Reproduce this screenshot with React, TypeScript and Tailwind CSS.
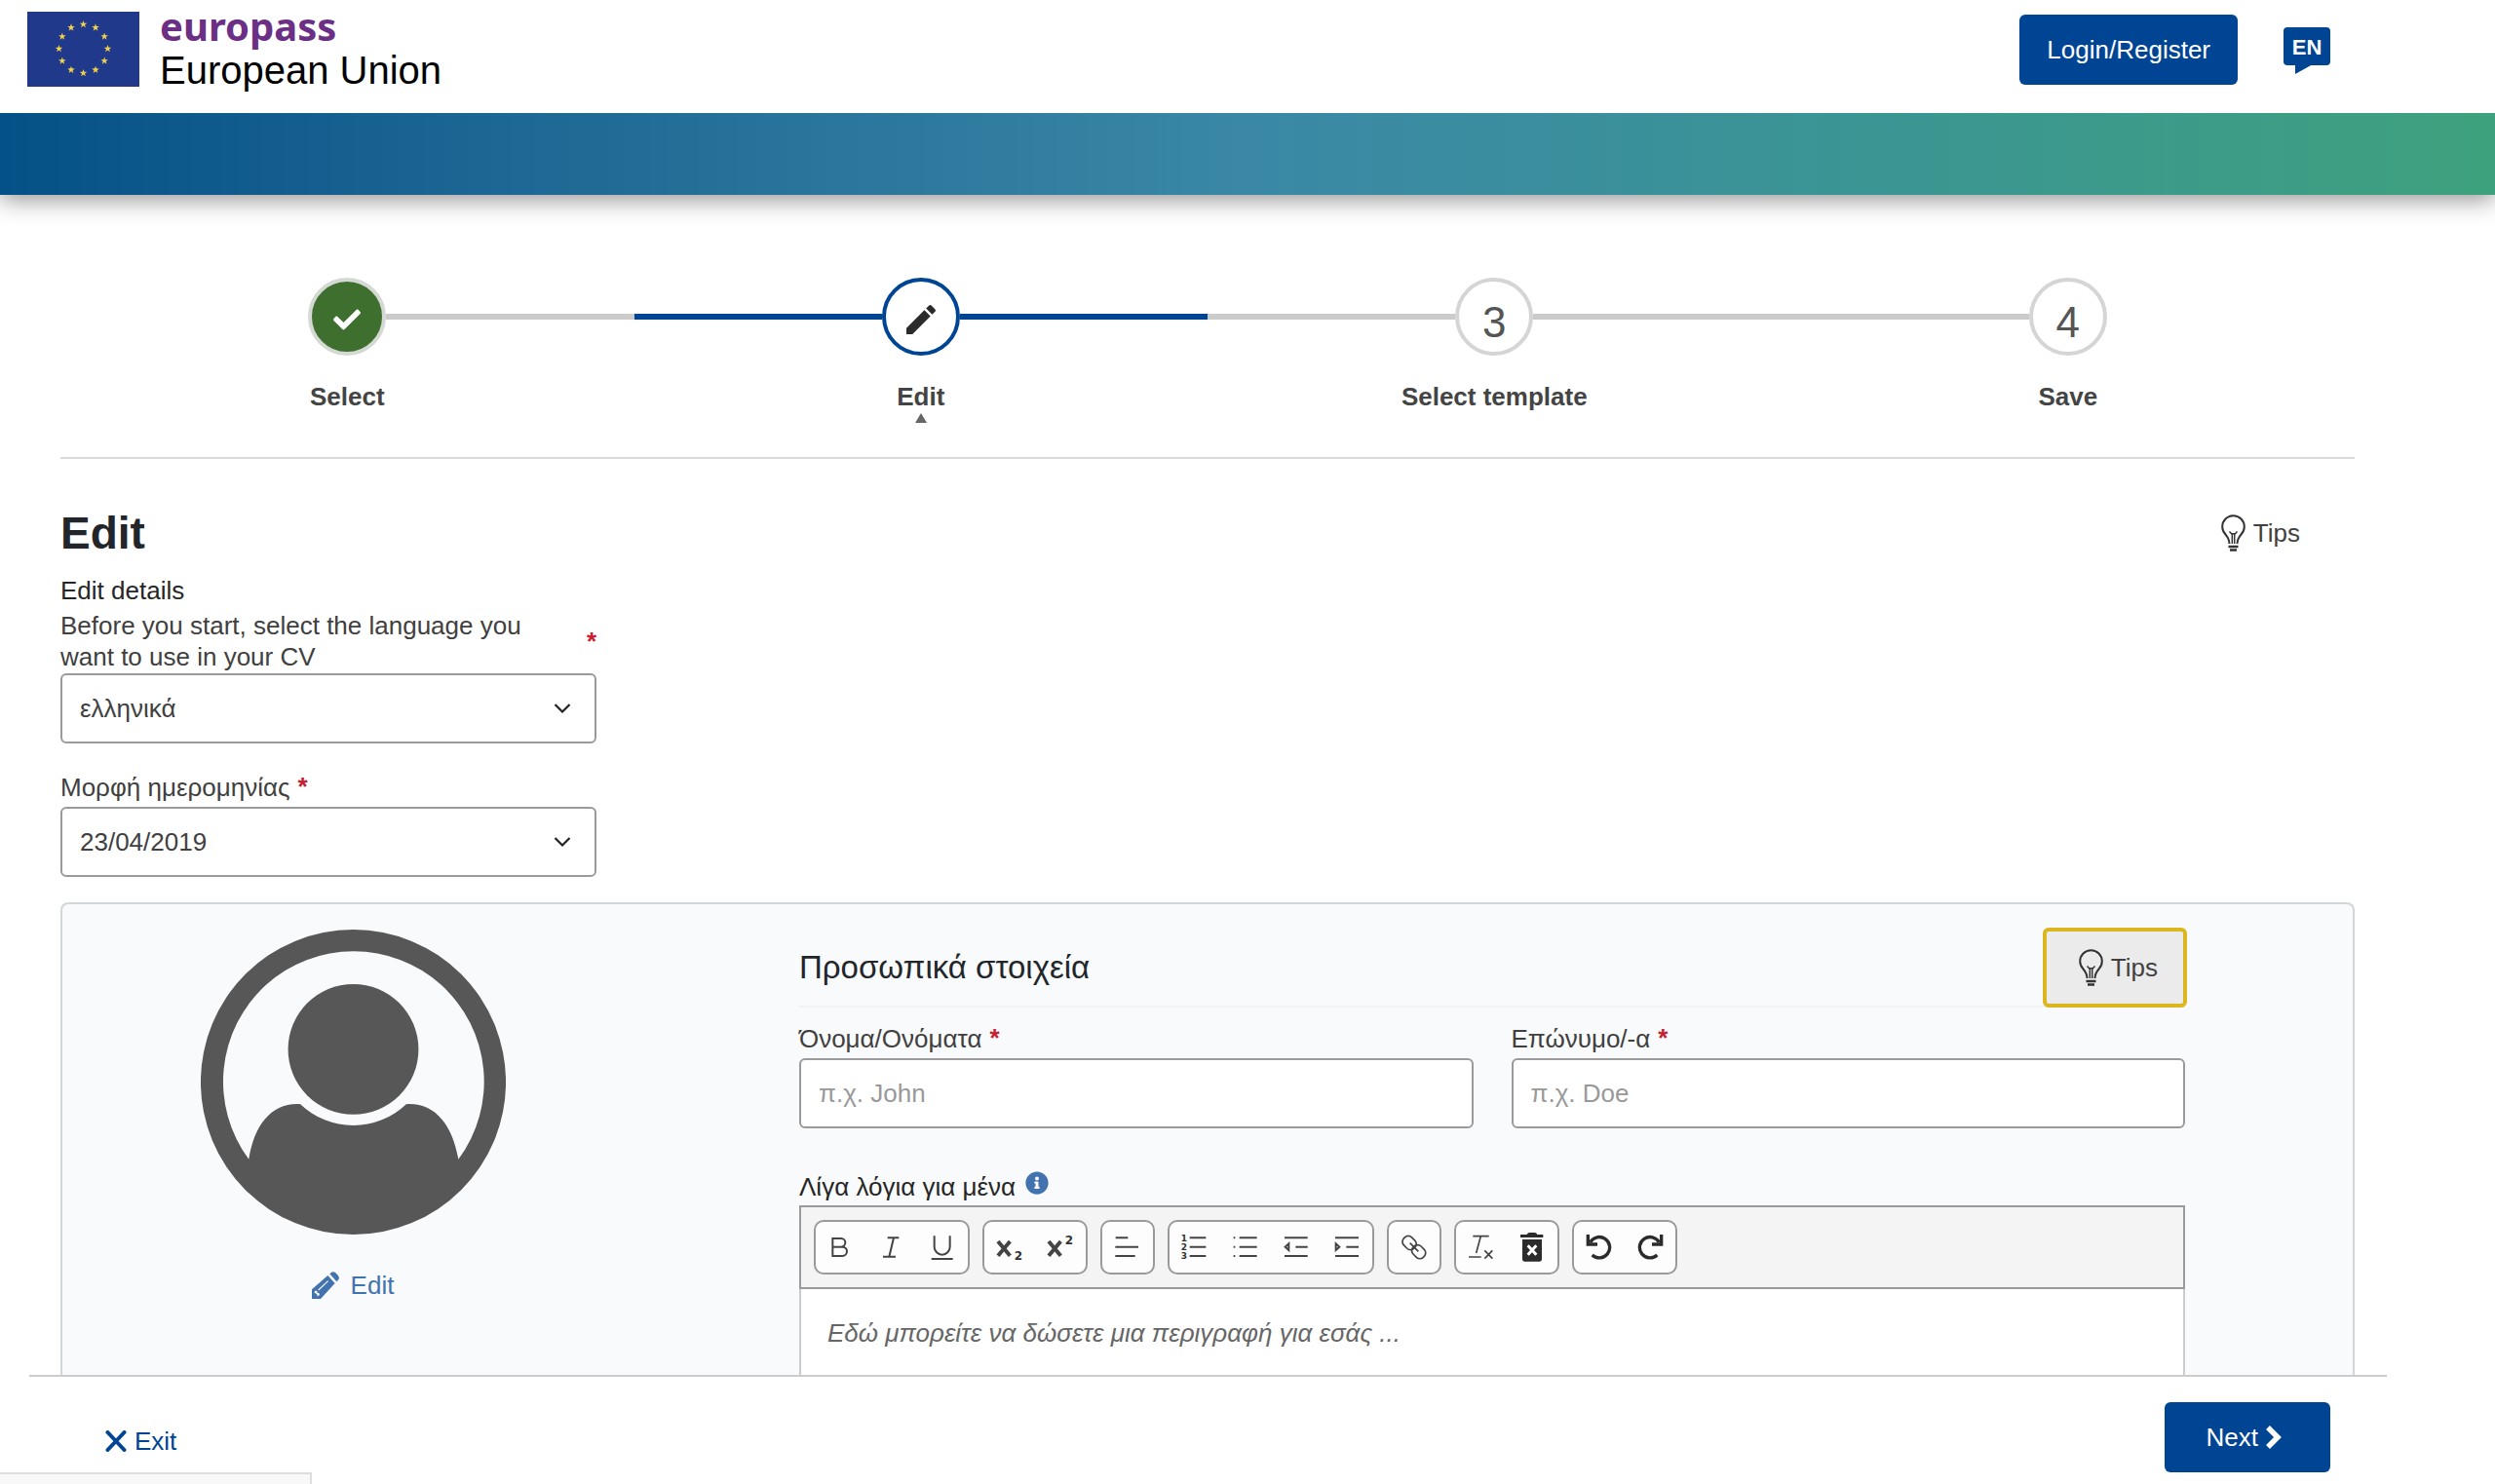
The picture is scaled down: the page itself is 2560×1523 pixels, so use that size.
import { useState } from 'react';
import type { ReactNode } from 'react';
import { FaCheck, FaInfoCircle } from 'react-icons/fa';
import { MdEdit } from 'react-icons/md';

const starPoints = (cx: number, cy: number, r: number) =>
  Array.from({ length: 10 }, (_, i) => {
    const radius = i % 2 === 0 ? r : r * 0.4;
    const angle = (Math.PI / 5) * i - Math.PI / 2;
    return `${cx + radius * Math.cos(angle)},${cy + radius * Math.sin(angle)}`;
  }).join(' ');

function EuFlag() {
  return (
    <svg viewBox="0 0 115 77" className="mt-3 h-[77px] w-[115px]" aria-hidden="true">
      <rect width="115" height="77" fill="#20398a" />
      {Array.from({ length: 12 }, (_, i) => {
        const angle = (Math.PI / 6) * i;
        return (
          <polygon key={i} points={starPoints(57.5 + 25 * Math.sin(angle), 38 - 25 * Math.cos(angle), 4)} fill="#f2d24a" />
        );
      })}
    </svg>
  );
}

function Bulb() {
  return (
    <svg viewBox="0 0 25 38" className="h-[38px] w-[25px] shrink-0" fill="none" stroke="#333" strokeWidth="2" aria-hidden="true">
      <path d="M8.500 30C8.500 26 7 23.500 4.500 20.500a11.300 11.300 0 1 1 16 0C18 23.500 16.500 26 16.500 30" />
      <path d="M11.300 30V20.500L8.500 17.500M13.700 30V20.500L16.500 17.500M10 19.800h5" strokeWidth="1.500" />
      <path d="M7.500 33h10M9 36.500h7" strokeWidth="2.400" />
    </svg>
  );
}

function Pencil() {
  return (
    <svg viewBox="0 0 84 84" className="size-7" fill="currentColor" aria-hidden="true">
      <path d="M0 84V55L49 12L71 36L27 84Z" />
      <path d="M55 7Q64 -3 73 4L80 11Q88 20 79 28L76 31Z" />
      <path d="M20 57 50 29" stroke="#f8fafc" strokeWidth="3.500" />
      <path d="M9 60Q16 56 17 65Q26 65 23 73L17 76L15 68L8 66Z" fill="#f8fafc" />
    </svg>
  );
}

function Chevron() {
  return (
    <svg viewBox="0 0 18 12" className="pointer-events-none absolute top-1/2 right-[26px] h-3 w-[18px] -translate-y-1/2" fill="none" stroke="#222" strokeWidth="2.200" aria-hidden="true">
      <path d="M1.500 2 9 9.500 16.500 2" />
    </svg>
  );
}

function Required() {
  return <span className="text-[26px] leading-[30px] font-bold text-[#c8202f]">*</span>;
}

type Tool = { label: string; icon: ReactNode };

const digit = { fontFamily: 'DejaVu Sans, sans-serif', fontWeight: 700, fill: '#333', stroke: 'none' };

const undoPath = (
  <g strokeWidth="10" stroke="#2b2b2b">
    <path d="M43 39V69H72" />
    <path d="M50 63A32 32 0 1 1 56 102" />
  </g>
);

const toolGroups: Tool[][] = [
  [
    { label: 'Bold', icon: <path d="M52 51V105H82A14 14 0 0 0 82 77H52M52 77H78A13 13 0 0 0 78 51H52Z" /> },
    { label: 'Italic', icon: <path d="M65 49H100M51 107H90M84 49 70 107" /> },
    { label: 'Underline', icon: <path d="M53 43V77A24 24 0 0 0 101 77V43M44 114H110" /> },
  ],
  [
    {
      label: 'Subscript',
      icon: (
        <>
          <path d="M42 60 79 104M79 60 42 104" strokeWidth="12" />
          <text x="92" y="116" fontSize="36" {...digit}>2</text>
        </>
      ),
    },
    {
      label: 'Superscript',
      icon: (
        <>
          <path d="M42 60 79 104M79 60 42 104" strokeWidth="12" />
          <text x="92" y="70" fontSize="36" {...digit}>2</text>
        </>
      ),
    },
  ],
  [{ label: 'Align', icon: <path d="M41 49H79M40 77H111M40 105H101" /> }],
  [
    {
      label: 'Ordered list',
      icon: (
        <>
          <path d="M62 49H112M62 77H112M62 105H112" />
          <text x="35" y="59" fontSize="27" {...digit}>1</text>
          <text x="35" y="87" fontSize="27" {...digit}>2</text>
          <text x="35" y="115" fontSize="27" {...digit}>3</text>
        </>
      ),
    },
    {
      label: 'Bullet list',
      icon: <path d="M59 49H113M59 77H113M59 105H113M41 49h5M41 77h5M41 105h5" />,
    },
    {
      label: 'Decrease indent',
      icon: (
        <>
          <path d="M42 49H113M76 77H113M42 105H113" />
          <path d="M55 67V87L44 77Z" />
        </>
      ),
    },
    {
      label: 'Increase indent',
      icon: (
        <>
          <path d="M42 49H114M76 77H114M42 105H114" />
          <path d="M44 67V87L55 77Z" />
        </>
      ),
    },
  ],
  [
    {
      label: 'Link',
      icon: (
        <g strokeWidth="5">
          <rect x="42" y="48" width="44" height="34" rx="15" transform="rotate(45 64 64)" />
          <rect x="70" y="75" width="44" height="34" rx="15" transform="rotate(45 92 92)" />
          <path d="M65 65 91 91" />
        </g>
      ),
    },
  ],
  [
    {
      label: 'Clear formatting',
      icon: (
        <g strokeWidth="5">
          <path d="M52 44H101M76 44 62 96M39 108H77" />
          <path d="M88 88 112 113M112 88 88 113" />
        </g>
      ),
    },
    {
      label: 'Delete all',
      icon: (
        <>
          <path d="M42 39H62Q64 33 70 33H86Q92 33 94 39H112V48H42ZM48 54H108V114Q108 122 100 122H56Q48 122 48 114Z" fill="#2b2b2b" stroke="none" />
          <path d="M65 73 91 101M91 73 65 101" stroke="#fff" strokeWidth="9" />
        </>
      ),
    },
  ],
  [
    { label: 'Undo', icon: undoPath },
    { label: 'Redo', icon: <g transform="translate(156 0) scale(-1 1)">{undoPath}</g> },
  ],
];

function ToolButton({ label, icon }: Tool) {
  return (
    <button type="button" aria-label={label} className="size-[52px]">
      <svg viewBox="0 0 156 156" className="size-full" fill="none" stroke="#444" strokeWidth="6">
        {icon}
      </svg>
    </button>
  );
}

const steps = [
  { title: 'Select', state: 'done' },
  { title: 'Edit', state: 'active' },
  { title: 'Select template', state: 'todo' },
  { title: 'Save', state: 'todo' },
];

function Stepper() {
  return (
    <ol className="grid grid-cols-4 border-b-2 border-[#d9d9d9] pt-[85px] pb-[35px]">
      {steps.map((step, i) => {
        const active = step.state === 'active';
        const line = active ? 'bg-[#004494]' : 'bg-[#cbcbcb]';
        return (
          <li key={step.title} className="flex flex-col items-center">
            <div className="flex w-full items-center">
              <span className={`h-1.5 flex-1 ${i === 0 ? 'bg-transparent' : line}`} />
              {step.state === 'done' && (
                <span className="flex size-20 items-center justify-center rounded-full border-4 border-[#d5d9d3] bg-[#3e6f2f] pt-1.5 text-white">
                  <FaCheck className="size-7" />
                </span>
              )}
              {active && (
                <span className="flex size-20 items-center justify-center rounded-full border-4 border-[#004494] bg-white pt-1.5 text-[#2b2b2b]">
                  <MdEdit className="size-10" />
                </span>
              )}
              {step.state === 'todo' && (
                <span className="flex size-20 items-center justify-center rounded-full border-4 border-[#d5d5d5] bg-white pt-3 text-[44px] leading-none text-[#555]">
                  {i + 1}
                </span>
              )}
              <span className={`h-1.5 flex-1 ${i === steps.length - 1 ? 'bg-transparent' : line}`} />
            </div>
            <span className="mt-[26px] leading-8 font-bold text-[#444]">{step.title}</span>
            <svg viewBox="0 0 12 10" className="mt-px h-2.5 w-3" aria-hidden="true">
              {active && <path d="M6 0 12 10H0Z" fill="#666" />}
            </svg>
          </li>
        );
      })}
    </ol>
  );
}

const fieldClass =
  'h-[72px] w-full rounded-md border-2 border-[#9a9a9a] bg-white px-[18px] text-[26px] text-[#404040] placeholder:text-[#999]';

export default function App() {
  const [language, setLanguage] = useState('el');
  const [dateFormat, setDateFormat] = useState('dmy');

  return (
    <div className="relative flex h-screen flex-col overflow-hidden bg-white font-['Liberation_Sans',Arial,sans-serif] text-[26px] text-[#404040]">
      <header className="relative z-10 shrink-0">
        <div className="relative z-10 flex h-[116px] items-start justify-between bg-white pr-[169px] pl-7">
          <a href="#" className="flex items-start gap-[21px]">
            <EuFlag />
            <span className="flex flex-col text-[40px]">
              <span className="font-['Noto_Sans',sans-serif] leading-[54px] font-bold text-[#6b2f86]">europass</span>
              <span className="-mt-1 leading-[44px] text-black">European Union</span>
            </span>
          </a>
          <div className="flex items-start gap-[47px] pt-[15px]">
            <button type="button" className="h-[72px] rounded-md bg-[#004494] px-7 text-white">
              Login/Register
            </button>
            <button type="button" className="relative mt-[13px] h-[39px] w-12 rounded bg-[#004494] text-[22px] leading-[41px] font-bold text-white">
              EN
              <svg viewBox="0 0 18 10" className="absolute top-[38px] left-3 h-2.5 w-[18px]" aria-hidden="true">
                <path d="M0 0H18L0 10Z" fill="#004494" />
              </svg>
            </button>
          </div>
        </div>
        <div className="h-[84px] bg-linear-to-r from-[#045187] via-[#3a88a6] to-[#3ea17d] shadow-[0_4px_24px_rgba(0,0,0,0.45)]" />
      </header>

      <main className="min-h-0 flex-1 overflow-hidden pr-[144px] pl-[62px]">
        <Stepper />

        <div className="mt-12 flex items-center justify-between">
          <h1 className="text-[46px] leading-[56px] font-bold text-[#22262a]">Edit</h1>
          <button type="button" className="mr-14 flex items-center gap-2">
            <Bulb />
            Tips
          </button>
        </div>
        <p className="mt-[13px] leading-9 text-[#262626]">Edit details</p>

        <div className="w-[550px]">
          <label htmlFor="language" className="mt-0.5 mb-px flex items-center justify-between leading-8">
            <span className="w-[500px]">Before you start, select the language you want to use in your CV</span>
            <Required />
          </label>
          <div className="relative">
            <select id="language" value={language} onChange={(e) => setLanguage(e.target.value)} className={`${fieldClass} appearance-none`}>
              <option value="el">ελληνικά</option>
            </select>
            <Chevron />
          </div>
          <label htmlFor="date-format" className="mt-[29px] mb-1 flex gap-2 leading-8">
            Μορφή ημερομηνίας
            <Required />
          </label>
          <div className="relative">
            <select id="date-format" value={dateFormat} onChange={(e) => setDateFormat(e.target.value)} className={`${fieldClass} appearance-none`}>
              <option value="dmy">23/04/2019</option>
            </select>
            <Chevron />
          </div>
        </div>

        <section className="mt-[26px] flex rounded-t-lg border-2 border-b-0 border-[#d3d6d8] bg-[#f8fafc] pt-[26px] pr-[172px]">
          <div className="mr-[160px] flex w-[596px] shrink-0 flex-col items-center">
            <svg viewBox="0 0 940 940" className="size-[313px]" fill="#575757" aria-label="Profile picture">
              <path fillRule="evenodd" d="M470 0a470 470 0 1 1 0 940a470 470 0 1 1 0-940ZM148 708C165 600 220 532 307 538A235 235 0 0 0 633 538C720 532 775 600 794 708A402 402 0 1 0 148 708Z" />
              <circle cx="470" cy="369" r="201" />
            </svg>
            <button type="button" className="mt-9 flex items-center gap-3 leading-8 text-[#4273ae]">
              <Pencil />
              Edit
            </button>
          </div>

          <div className="min-w-0 flex-1">
            <div className="flex items-center justify-between border-b-2 border-[#f1f2f3]">
              <h2 className="text-[33px] leading-10 text-[#22262a]">Προσωπικά στοιχεία</h2>
              <button
                type="button"
                className="flex h-[78px] items-center gap-2 rounded bg-[#ebebeb] pr-7 pl-[35px] outline-4 -outline-offset-2 outline-[#dcb61f]"
              >
                <Bulb />
                Tips
              </button>
            </div>

            <div className="mt-4 grid grid-cols-2 gap-[39px]">
              <div>
                <label htmlFor="first-name" className="mb-1 flex gap-2 leading-8">
                  Όνομα/Ονόματα
                  <Required />
                </label>
                <input id="first-name" type="text" placeholder="π.χ. John" className={fieldClass} />
              </div>
              <div>
                <label htmlFor="last-name" className="mb-1 flex gap-2 leading-8">
                  Επώνυμο/-α
                  <Required />
                </label>
                <input id="last-name" type="text" placeholder="π.χ. Doe" className={fieldClass} />
              </div>
            </div>

            <div className="mt-11 mb-[3px] flex gap-2.5 leading-8 text-[#262626]">
              <label htmlFor="about">Λίγα λόγια για μένα</label>
              <FaInfoCircle className="size-6 text-[#4273ae]" />
            </div>
            <div className="flex flex-wrap gap-[13px] border-2 border-[#9a9a9a] bg-[#f4f4f4] p-[13px]">
              {toolGroups.map((group) => (
                <div key={group[0].label} className="flex rounded-[10px] border-2 border-[#9a9a9a] bg-[#fdfdfd]">
                  {group.map((tool) => (
                    <ToolButton key={tool.label} {...tool} />
                  ))}
                </div>
              ))}
            </div>
            <textarea
              id="about"
              rows={6}
              placeholder="Εδώ μπορείτε να δώσετε μια περιγραφή για εσάς ..."
              className="block w-full resize-none border-2 border-t-0 border-[#ccc] bg-white px-[27px] pt-[29px] leading-8 placeholder:text-[#666] placeholder:italic"
            />
          </div>
        </section>
      </main>

      <footer className="mr-[111px] ml-[30px] flex shrink-0 items-center justify-between border-t-2 border-[#ccc] pt-[26px] pr-[58px] pb-3 pl-[78px]">
        <button type="button" className="flex items-center gap-2 pt-2 leading-8 text-[#004494]">
          <svg viewBox="0 0 22 22" className="size-[22px]" fill="none" stroke="currentColor" strokeWidth="4" strokeLinecap="round" aria-hidden="true">
            <path d="M2.500 2 19.500 20M19.500 2 2.500 20" />
          </svg>
          Exit
        </button>
        <button type="button" className="flex h-[72px] items-center gap-2 rounded-md bg-[#004494] pr-[50px] pl-[43px] text-white">
          Next
          <svg viewBox="0 0 16 24" className="h-6 w-4" fill="none" stroke="currentColor" strokeWidth="5.500" aria-hidden="true">
            <path d="M2 2 12 12 2 22" />
          </svg>
        </button>
      </footer>

      <div className="absolute bottom-0 left-0 h-3 w-80 border-t-2 border-r-2 border-[#dedede] bg-[#f8f8f8]" />
    </div>
  );
}
